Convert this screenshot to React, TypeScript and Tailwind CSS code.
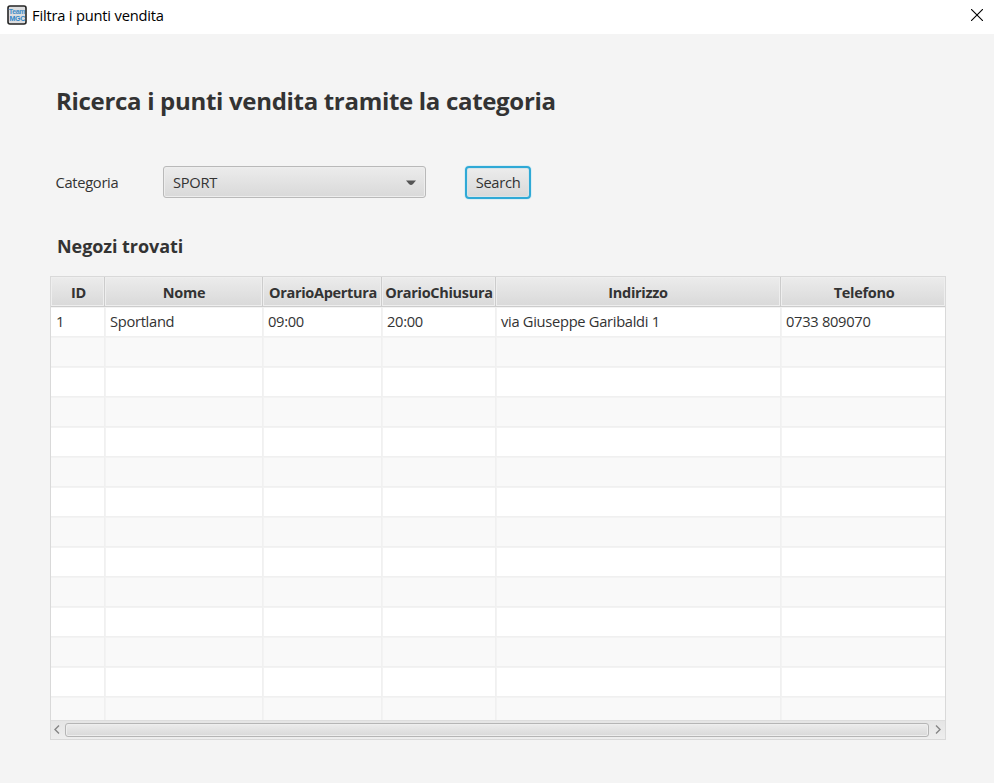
import React from "react";

type Column = { name: string; value: string; width: string; head: string };

const columns: Column[] = [
  { name: "ID", value: "1", width: "w-[54px]", head: "pl-[2px]" },
  { name: "Nome", value: "Sportland", width: "w-[158px]", head: "pl-[1px]" },
  { name: "OrarioApertura", value: "09:00", width: "w-[119px]", head: "pl-[2px]" },
  { name: "OrarioChiusura", value: "20:00", width: "w-[114px]", head: "pl-[1px]" },
  { name: "Indirizzo", value: "via Giuseppe Garibaldi 1", width: "w-[285px]", head: "" },
  { name: "Telefono", value: "0733 809070", width: "w-[164px]", head: "pl-[2px]" },
];

const rows = Array.from({ length: 14 }, (_, i) => i);

function TitleBar() {
  return (
    <header className="flex h-[34px] items-start bg-white text-black">
      <svg className="ml-[7px] mt-[5px] shrink-0" width="20" height="20" viewBox="0 0 20 20">
        <rect x="1" y="1" width="18" height="18" rx="2" fill="#dcdddf" stroke="#252525" strokeWidth="1.6" />
        <text x="10" y="9" textAnchor="middle" textLength="16.5" lengthAdjust="spacingAndGlyphs" fontFamily="Liberation Sans, sans-serif" fontWeight="700" fontSize="6.5" fill="#3c8cc8">Team</text>
        <text x="10.3" y="16.3" textAnchor="middle" textLength="15.5" lengthAdjust="spacingAndGlyphs" fontFamily="Liberation Sans, sans-serif" fontWeight="700" fontSize="7" fill="#2f86c8">MGC</text>
      </svg>
      <span className="ml-[5px] mt-[5px] text-[14.7px] leading-[20px] tracking-[-0.2px]">Filtra i punti vendita</span>
      <svg className="ml-auto mr-[11px] mt-[9px]" width="12" height="12" viewBox="0 0 12 12">
        <path d="M0 0L12 12M12 0L0 12" stroke="#000" strokeWidth="1.1" />
      </svg>
    </header>
  );
}

function Arrow({ d }: { d: string }) {
  return (
    <svg className="-mt-px shrink-0" width="6" height="9" viewBox="0 0 6 9">
      <path d={d} fill="none" stroke="#858585" strokeWidth="1.4" />
    </svg>
  );
}

export default function App() {
  return (
    <div className="flex h-[783px] w-[994px] flex-col overflow-hidden bg-[#f4f4f4] font-['Open_Sans','Noto_Sans',sans-serif] text-[14.7px] tracking-[-0.3px] text-[#333333]">
      <TitleBar />
      <main className="flex flex-col pl-[50px] pt-[49px]">
        <h1 className="ml-[6px] h-[36px] whitespace-nowrap text-[24px] font-bold leading-[36px] tracking-[-0.31px]">
          Ricerca i punti vendita tramite la categoria
        </h1>
        <div className="mt-[46px] flex h-[35px] items-start pt-px">
          <label className="ml-[5.5px] w-[107.5px] leading-[33px]">Categoria</label>
          <div className="flex h-[32px] w-[263px] items-center justify-between rounded-[3px] border border-[#b9b9b9] bg-linear-to-b from-[#ececec] to-[#d9d9d9] pl-[9px] pr-[9px] shadow-[inset_0_0_0_1px_#ededed]">
            <span>SPORT</span>
            <svg className="mt-px" width="10" height="6" viewBox="0 0 10 6"><path d="M0 .5H10L7 4Q5 6 3 4Z" fill="#555" /></svg>
          </div>
          <button className="ml-[39px] flex h-[33px] w-[66px] items-center justify-center rounded-[4px] border-2 border-[#2fa9d6] bg-linear-to-b from-[#ececec] to-[#d9d9d9] shadow-[0_0_0_1px_#dceef4,inset_0_0_0_1px_#d7e4e8]">
            Search
          </button>
        </div>
        <h2 className="ml-[7px] mt-[32px] h-[28px] text-[18px] font-bold leading-[28px] tracking-[-0.06px]">Negozi trovati</h2>
        <section className="mt-[16px] flex h-[464px] w-[896px] flex-col border border-[#d9d9d9] bg-white">
          <div className="flex h-[30px] shrink-0 border-b border-[#cccccc] bg-linear-to-b from-[#ececec] to-[#d9d9d9]">
            {columns.map((c) => (
              <div key={c.name} className={`${c.width} ${c.head} flex shrink-0 items-center justify-center whitespace-nowrap border-r border-[#cccccc] pt-[2px] text-[14.5px] font-bold shadow-[inset_0_0_0_1px_#eeeeee] last:border-r-0`}>
                {c.name}
              </div>
            ))}
          </div>
          <div className="h-[413px] overflow-hidden">
            {rows.map((r) => (
              <div key={r} className={`flex h-[30px] border-b border-[#f0f0f0] shadow-[inset_0_1px_0_0_#f3f3f3] ${r % 2 ? "bg-[#f9f9f9]" : "bg-white"}`}>
                {columns.map((c) => (
                  <div key={c.name} className={`${c.width} shrink-0 whitespace-nowrap border-r border-[#f0f0f0] pl-[5px] leading-[29px] shadow-[1px_0_0_0_#f3f3f3] last:border-r-0 last:shadow-none`}>
                    {r === 0 ? c.value : ""}
                  </div>
                ))}
              </div>
            ))}
          </div>
          <div className="flex h-[19px] shrink-0 items-start border-t border-[#dddddd] bg-linear-to-b from-[#e5e5e5] to-[#eeeeee] pl-[3px] pt-[2px]">
            <div className="flex items-center">
              <Arrow d="M5 .5L1 4.5L5 8.5" />
              <div className="ml-[5px] mr-[6px] h-[14px] w-[864px] rounded-[3px] border border-[#b5b5b5] bg-linear-to-b from-[#ececec] to-[#d9d9d9] shadow-[inset_0_0_0_1px_#eeeeee]" />
              <Arrow d="M1 .5L5 4.5L1 8.5" />
            </div>
          </div>
        </section>
      </main>
    </div>
  );
}
